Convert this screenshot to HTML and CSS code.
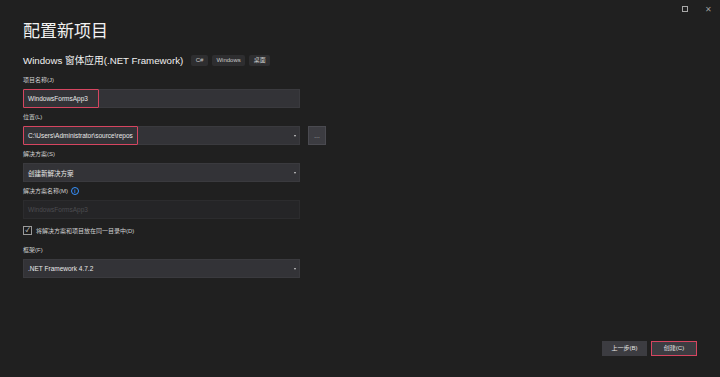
FILE: index.html
```html
<!DOCTYPE html>
<html lang="zh-CN">
<head>
    <meta charset="UTF-8">
    <meta name="viewport" content="width=device-width, initial-scale=1.0">
    <title>配置新项目</title>
    <link rel="stylesheet" href="styles.css">
</head>
<body>
    <div class="window">
        <div class="titlebar">
            <span class="win-btn max"><i></i></span>
            <span class="win-btn close">✕</span>
        </div>
        <h1 class="title">配置新项目</h1>
        <div class="subtitle">
            <span class="tpl">Windows 窗体应用(.NET Framework)</span>
            <span class="tag">C#</span>
            <span class="tag">Windows</span>
            <span class="tag">桌面</span>
        </div>

        <div class="form">
            <div class="field">
                <div class="label">项目名称(J)</div>
                <div class="input focus-name"><span class="hl">WindowsFormsApp3</span></div>
            </div>
            <div class="field">
                <div class="label">位置(L)</div>
                <div class="row">
                    <div class="input select"><span class="hl">C:\Users\Administrator\source\repos</span><i class="caret"></i></div>
                    <div class="browse">…</div>
                </div>
            </div>
            <div class="field">
                <div class="label">解决方案(S)</div>
                <div class="input select">创建新解决方案<i class="caret"></i></div>
            </div>
            <div class="field">
                <div class="label">解决方案名称(M) <span class="info">i</span></div>
                <div class="input disabled">WindowsFormsApp3</div>
            </div>
            <div class="check">
                <span class="box">✓</span>
                <span>将解决方案和项目放在同一目录中(D)</span>
            </div>
            <div class="field">
                <div class="label">框架(F)</div>
                <div class="input select">.NET Framework 4.7.2<i class="caret"></i></div>
            </div>
        </div>

        <div class="footer">
            <div class="btn">上一步(B)</div>
            <div class="btn primary">创建(C)</div>
        </div>
    </div>
</body>
</html>
```

FILE: styles.css
```css
html, body {
    margin: 0;
    width: 100%;
    height: 100%;
}
body {
    background: #202020;
    color: #d4d4d4;
    font-family: "Liberation Sans", "Noto Sans CJK SC", sans-serif;
}
.window {
    height: 100%;
    display: flex;
    flex-direction: column;
    padding: 0 23px;
    box-sizing: border-box;
}
.titlebar {
    height: 16px;
    display: flex;
    justify-content: flex-end;
    align-items: center;
    gap: 17px;
    margin-right: -15px;
    padding-top: 1px;
}
.win-btn {
    width: 7px;
    height: 7px;
    display: flex;
    justify-content: center;
    align-items: center;
    color: #9a9a9a;
    font-size: 8px;
    line-height: 7px;
}
.win-btn.max i {
    display: block;
    width: 4px;
    height: 4px;
    border: 1.5px solid #a8a8a8;
}
.title {
    margin: 3px 0 0;
    font-size: 17px;
    line-height: 24px;
    font-weight: normal;
    color: #f1f1f1;
}
.subtitle {
    margin-top: 9px;
    height: 14px;
    display: flex;
    align-items: center;
    gap: 4px;
}
.tpl {
    font-size: 9.7px;
    color: #f1f1f1;
    margin-right: 4px;
}
.tag {
    height: 11px;
    padding: 0 4.5px;
    border-radius: 2px;
    background: #2e2e30;
    color: #c8c8c8;
    font-size: 6px;
    line-height: 11px;
}
.form {
    margin-top: 8px;
    width: 277px;
}
.field {
    margin-bottom: 4px;
}
.label {
    height: 10px;
    line-height: 10px;
    margin-bottom: 4px;
    font-size: 6px;
    color: #d0d0d0;
    display: flex;
    align-items: center;
    gap: 3px;
}
.info {
    width: 6px;
    height: 6px;
    border: 1px solid #3794ff;
    border-radius: 50%;
    color: #3794ff;
    font-size: 5px;
    line-height: 6px;
    text-align: center;
    font-weight: bold;
}
.row {
    display: flex;
    gap: 8px;
    width: 303px;
}
.input {
    position: relative;
    height: 19px;
    box-sizing: border-box;
    background: #333337;
    border: 1px solid #3a3a3e;
    display: flex;
    align-items: center;
    padding-left: 4px;
    font-size: 6.5px;
    color: #e8e8e8;
    flex: 1;
}
.input .hl {
    height: 19px;
    box-sizing: border-box;
    margin: -1px 0 -1px -5px;
    padding: 0 4px;
    border: 1.5px solid #d64560;
    border-radius: 1px;
    display: flex;
    align-items: center;
}
.focus-name .hl {
    width: 76px;
}
.input.disabled {
    background: #252527;
    border-color: #2c2c2e;
    color: #4c4c50;
}
.caret {
    position: absolute;
    right: 3px;
    top: 8px;
    width: 0;
    height: 0;
    border-left: 1.5px solid transparent;
    border-right: 1.5px solid transparent;
    border-top: 2px solid #cfcfcf;
}
.browse {
    width: 18px;
    height: 19px;
    box-sizing: border-box;
    background: #3c3c41;
    border: 1px solid #4a4a50;
    color: #e0e0e0;
    font-size: 6px;
    line-height: 19px;
    text-align: center;
}
.check {
    height: 14px;
    margin-bottom: 8px;
    display: flex;
    align-items: center;
    gap: 4px;
    font-size: 6px;
    color: #d0d0d0;
}
.check .box {
    width: 7px;
    height: 7px;
    border: 1px solid #9a9a9a;
    background: #1c1c1c;
    color: #f0f0f0;
    font-size: 6px;
    line-height: 7px;
    text-align: center;
}
.footer {
    margin-top: auto;
    margin-bottom: 21px;
    display: flex;
    justify-content: flex-end;
    gap: 4px;
}
.btn {
    width: 45px;
    height: 15px;
    box-sizing: border-box;
    background: #3c3c41;
    border: 1px solid #3c3c41;
    color: #e6e6e6;
    font-size: 6px;
    line-height: 13px;
    text-align: center;
}
.btn.primary {
    width: 46px;
    border: 1.5px solid #d64560;
    line-height: 12px;
}
```
